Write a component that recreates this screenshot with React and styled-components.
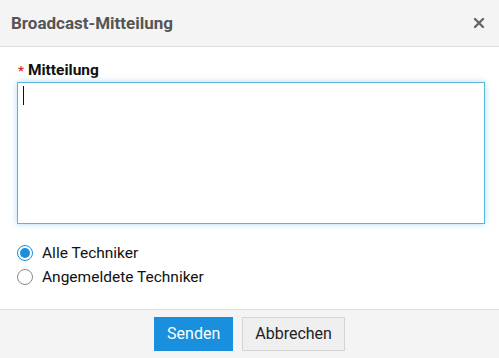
import styled, { createGlobalStyle } from "styled-components";

const GlobalStyle = createGlobalStyle`
  html, body {
    margin: 0;
    padding: 0;
    background: #fff;
  }
  body {
    font-family: Roboto, "Liberation Sans", Arial, sans-serif;
    color: #222;
  }
`;

const App = () => {
  return (
    <>
      <GlobalStyle />
      <Dialog>
        <Header>
          <Title>Broadcast-Mitteilung</Title>
          <CloseButton aria-label="Schließen">
            <svg width="12" height="12" viewBox="0 0 12 12">
              <path
                d="M2 2 L10 10 M10 2 L2 10"
                stroke="#666"
                strokeWidth="2.4"
                strokeLinecap="round"
              />
            </svg>
          </CloseButton>
        </Header>
        <Body>
          <Label>
            <Required>*</Required>
            Mitteilung
          </Label>
          <TextareaWrap>
            <MessageInput />
            <Caret />
          </TextareaWrap>
          <RadioGroup>
            <RadioRow>
              <Radio checked />
              Alle Techniker
            </RadioRow>
            <RadioRow>
              <Radio />
              Angemeldete Techniker
            </RadioRow>
          </RadioGroup>
        </Body>
        <Footer>
          <Button $primary>Senden</Button>
          <Button>Abbrechen</Button>
        </Footer>
      </Dialog>
    </>
  );
};

export default App;

const Radio = ({ checked }) => (
  <RadioCircle $checked={checked}>{checked && <RadioDot />}</RadioCircle>
);

const Dialog = styled.div`
  width: 499px;
  height: 358px;
  display: flex;
  flex-direction: column;
  background: #fff;
  overflow: hidden;
`;

const Header = styled.div`
  height: 46px;
  flex-shrink: 0;
  display: flex;
  align-items: center;
  justify-content: space-between;
  padding: 0 14px 0 11px;
  background: #f4f4f4;
  border-bottom: 1px solid #dcdcdc;
`;

const Title = styled.h1`
  margin: 0;
  font-size: 17px;
  font-weight: 700;
  color: #555;
`;

const CloseButton = styled.button`
  border: none;
  background: none;
  padding: 0;
  display: flex;
  cursor: pointer;
`;

const Body = styled.div`
  flex: 1;
  padding: 14px 14px 0 17px;
`;

const Label = styled.div`
  font-size: 15.5px;
  font-weight: 700;
  color: #111;
  line-height: 18px;
  margin: 0 0 2px 1px;
`;

const Required = styled.span`
  color: #e0282e;
  font-size: 13px;
  margin-right: 4px;
`;

const TextareaWrap = styled.div`
  position: relative;
  width: 468px;
`;

const MessageInput = styled.textarea`
  display: block;
  box-sizing: border-box;
  width: 468px;
  height: 142px;
  resize: none;
  border: 1px solid #5ab7d8;
  border-radius: 0;
  outline: none;
  box-shadow: 0 0 6px rgba(102, 190, 240, 0.55);
  font-family: inherit;
  font-size: 14px;
`;

const Caret = styled.span`
  position: absolute;
  left: 6px;
  top: 4px;
  width: 1px;
  height: 19px;
  background: #111;
`;

const RadioGroup = styled.div`
  display: flex;
  flex-direction: column;
  gap: 4px;
  margin-top: 19px;
`;

const RadioRow = styled.label`
  display: flex;
  align-items: center;
  gap: 9px;
  font-size: 15.5px;
  color: #111;
  line-height: 20px;
`;

const RadioCircle = styled.span`
  box-sizing: border-box;
  width: 16px;
  height: 16px;
  border-radius: 50%;
  border: 1px solid ${(p) => (p.$checked ? "#1a8fdd" : "#8a8a8a")};
  display: flex;
  align-items: center;
  justify-content: center;
  background: #fff;
`;

const RadioDot = styled.span`
  width: 10px;
  height: 10px;
  border-radius: 50%;
  background: #1a8fdd;
`;

const Footer = styled.div`
  height: 47px;
  flex-shrink: 0;
  display: flex;
  justify-content: center;
  align-items: center;
  gap: 9px;
  padding-bottom: 1px;
  background: #f4f4f4;
  border-top: 1px solid #dcdcdc;
`;

const Button = styled.button`
  height: 34px;
  padding: 0 12px;
  font-family: inherit;
  font-size: 16px;
  border-radius: 0;
  cursor: pointer;
  border: 1px solid ${(p) => (p.$primary ? "#1a8fdd" : "#d4d4d4")};
  background: ${(p) => (p.$primary ? "#1a8fdd" : "#efefef")};
  color: ${(p) => (p.$primary ? "#fff" : "#222")};
`;
